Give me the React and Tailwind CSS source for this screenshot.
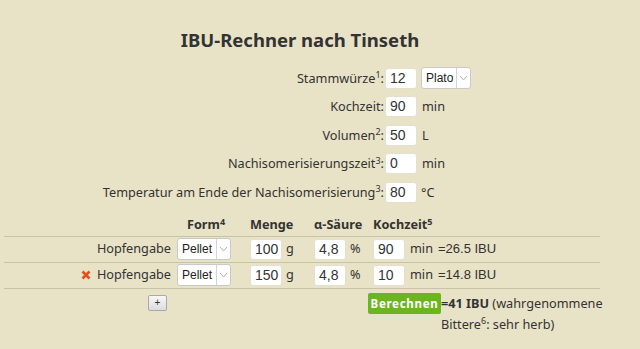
import React from "react";

const font = { fontFamily: '"Noto Sans", "Open Sans", sans-serif' };
const inFont = { fontFamily: '"Liberation Sans", Arial, sans-serif' };

function Inp({ v, w = "w-[32px]" }) {
  return (
    <div
      className={`${w} h-[21px] shrink-0 bg-white rounded-[3px] border border-[#e4e0d0] text-[14px] leading-[19px] pl-[4px] text-[#333]`}
      style={inFont}
    >
      {v}
    </div>
  );
}

function Sel({ v, w = "w-[50px]" }) {
  return (
    <div
      className={`${w} h-[22px] shrink-0 bg-white rounded-[3px] border border-[#c9c9c9] flex items-stretch text-[12px] text-[#222]`}
      style={inFont}
    >
      <div className="flex-1 pl-[4px] leading-[20px]">{v}</div>
      <div className="w-[14px] border-l border-[#d4d4d4] flex items-center justify-center">
        <svg width="9" height="6" viewBox="0 0 9 6">
          <polyline points="1,1 4.5,5 8,1" fill="none" stroke="#b0b0b0" strokeWidth="1" />
        </svg>
      </div>
    </div>
  );
}

function FormRow({ label, sup, children }) {
  return (
    <div className="flex items-center h-[28.5px]">
      <div className="w-[385px] shrink-0 text-right pr-[1px] text-[12.7px] text-[#333]">
        {label}
        {sup && <sup className="text-[9px]">{sup}</sup>}:
      </div>
      <div className="flex items-center gap-[4px]">{children}</div>
    </div>
  );
}

function Unit({ children, cls = "" }) {
  return <span className={`text-[12.7px] text-[#333] ${cls}`}>{children}</span>;
}

function HopRow({ x, menge, kochzeit, ibu }) {
  return (
    <div className="flex items-center h-[26px] border-b border-[#c8c2a6]">
      <div className="w-[170px] shrink-0 flex justify-end items-center pr-[3px] text-[12.7px] text-[#333]">
        {x && (
          <svg width="10" height="10" viewBox="0 0 10 10" className="mr-[6px]">
            <path d="M1.5 1.5 L8.5 8.5 M8.5 1.5 L1.5 8.5" stroke="#e0521b" strokeWidth="2.6" strokeLinecap="butt" />
          </svg>
        )}
        Hopfengabe
      </div>
      <div className="w-[76px] shrink-0 pl-[3px]">
        <Sel v="Pellet" w="w-[54px]" />
      </div>
      <div className="w-[64px] shrink-0 flex items-center gap-[4px]">
        <Inp v={menge} />
        <Unit>g</Unit>
      </div>
      <div className="w-[59px] shrink-0 flex items-center gap-[4px]">
        <Inp v="4,8" />
        <Unit>%</Unit>
      </div>
      <div className="w-[65px] shrink-0 flex items-center gap-[5px]">
        <Inp v={kochzeit} />
        <Unit>min</Unit>
      </div>
      <div className="text-[13px] text-[#333]" style={inFont}>
        {ibu}
      </div>
    </div>
  );
}

export default function App() {
  return (
    <div className="w-[640px] h-[349px] bg-[#e8e2c6] overflow-hidden" style={font}>
      <div className="w-[600px]">
        <h1 className="text-center text-[18.5px] font-bold text-[#333] pt-[26px] h-[64px]">
          IBU-Rechner nach Tinseth
        </h1>
        <FormRow label="Stammwürze" sup="1">
          <Inp v="12" />
          <Sel v="Plato" />
        </FormRow>
        <FormRow label="Kochzeit">
          <Inp v="90" />
          <Unit cls="ml-[1px]">min</Unit>
        </FormRow>
        <FormRow label="Volumen" sup="2">
          <Inp v="50" />
          <Unit cls="ml-[1px]">L</Unit>
        </FormRow>
        <FormRow label="Nachisomerisierungszeit" sup="3">
          <Inp v="0" />
          <Unit cls="ml-[1px]">min</Unit>
        </FormRow>
        <FormRow label="Temperatur am Ende der Nachisomerisierung" sup="3">
          <Inp v="80" />
          <Unit>°C</Unit>
        </FormRow>

        <div className="ml-[4px] w-[596px] mt-[6px]">
          <div className="flex items-end h-[24px] border-b border-[#c8c2a6] text-[12.7px] font-bold text-[#333] pb-[1px]">
            <div className="w-[170px] shrink-0"></div>
            <div className="w-[76px] shrink-0 text-center pr-[12px]">
              Form<sup className="text-[9px]">4</sup>
            </div>
            <div className="w-[64px] shrink-0">Menge</div>
            <div className="w-[59px] shrink-0">α-Säure</div>
            <div className="w-[65px] shrink-0">
              Kochzeit<sup className="text-[9px]">5</sup>
            </div>
          </div>
          <HopRow menge="100" kochzeit="90" ibu="=26.5 IBU" />
          <HopRow x menge="150" kochzeit="10" ibu="=14.8 IBU" />
          <div className="flex items-start pt-[4px]">
            <div className="w-[144px] shrink-0"></div>
            <button
              className="w-[19px] h-[16px] shrink-0 mt-[2px] rounded-[2px] border border-[#a9a9a9] bg-gradient-to-b from-[#f8f8f8] to-[#dcdcdc] text-[10px] leading-[12px] text-[#333] flex items-center justify-center"
              style={inFont}
            >
              +
            </button>
            <div className="w-[201px] shrink-0"></div>
            <button
              className="w-[73px] h-[21px] shrink-0 rounded-[2px] bg-[#6db51f] text-white font-bold text-[11.5px] tracking-[0.7px] leading-[21px] text-center"
              style={font}
            >
              Berechnen
            </button>
            <div className="w-[192px] shrink-0 text-[12.7px] text-[#333] leading-[21px]">
              <b>=41 IBU</b> (wahrgenommene Bittere<sup className="text-[9px]">6</sup>: sehr herb)
            </div>
          </div>
        </div>
      </div>
    </div>
  );
}
